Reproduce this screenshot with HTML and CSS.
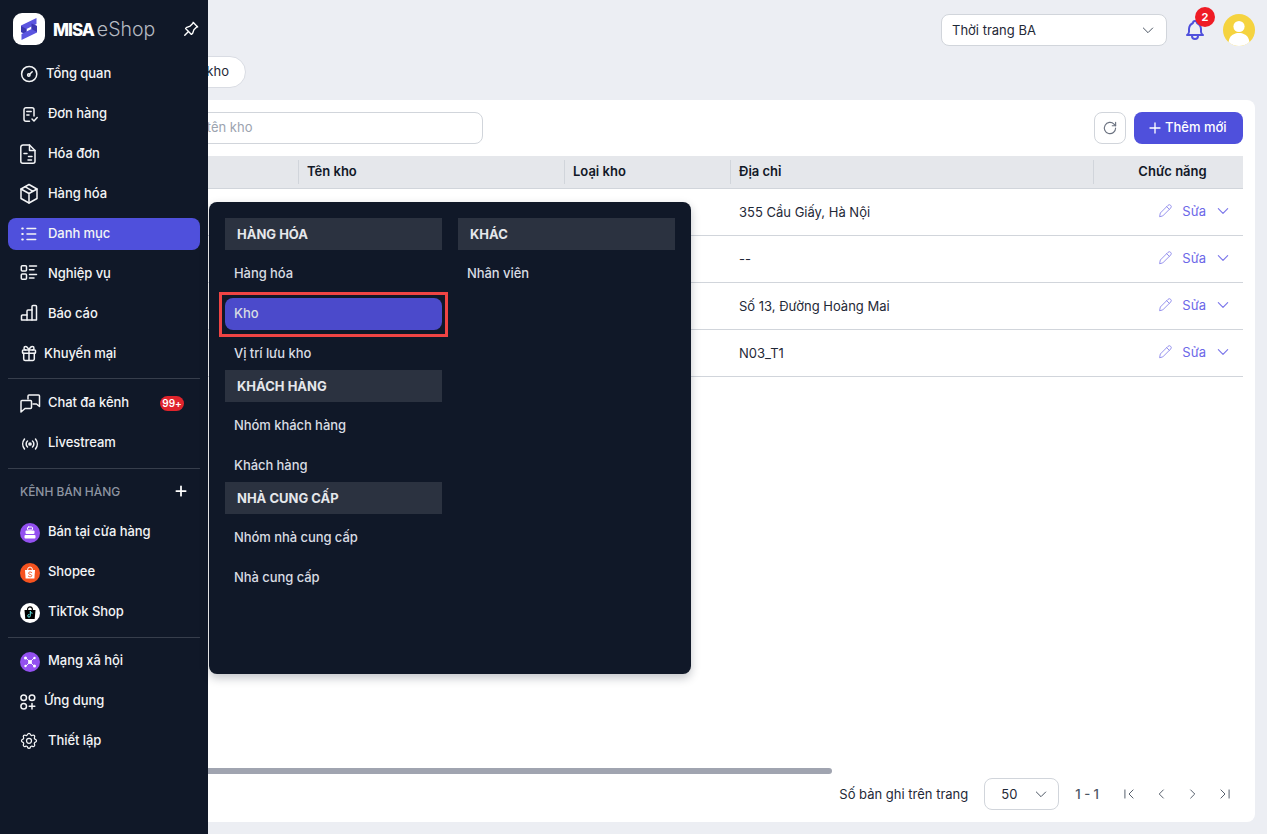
FILE: index.html
```html
<!DOCTYPE html>
<html lang="vi">
<head>
<meta charset="utf-8">
<title>Kho - MISA eShop</title>
<link rel="stylesheet" href="styles.css">
</head>
<body>
<div class="app">
  <main class="main">
    <header class="topbar">
      <div class="shop-select"><span>Thời trang BA</span>
        <svg class="chev" viewBox="0 0 24 24"><path d="M5 9l7 7 7-7"/></svg>
      </div>
      <div class="bell">
        <svg viewBox="0 0 24 24"><path d="M10 5a2 2 0 1 1 4 0a7 7 0 0 1 4 6v3a4 4 0 0 0 2 3H4a4 4 0 0 0 2-3v-3a7 7 0 0 1 4-6"/><path d="M9 17v1a3 3 0 0 0 6 0v-1"/></svg>
        <span class="bell-badge">2</span>
      </div>
      <div class="avatar">
        <svg viewBox="0 0 32 32"><circle cx="16" cy="16" r="16" fill="#f5d33f"/><circle cx="16" cy="12.500" r="5.600" fill="#fff"/><path d="M5.500 28c1-6.500 5.500-9 10.500-9s9.500 2.500 10.500 9a16 16 0 0 1-21 0z" fill="#fff"/></svg>
      </div>
    </header>
    <div class="tabs"><div class="tab">Danh sách kho</div></div>
    <section class="card">
      <div class="toolbar">
        <div class="search">Tìm kiếm theo mã kho, tên kho</div>
        <div class="toolbar-actions">
          <button class="refresh"><svg viewBox="0 0 24 24"><path d="M19.500 12a7.500 7.500 0 1 1-2.200-5.300L19.500 9"/><path d="M19.500 4.500V9H15"/></svg></button>
          <button class="add"><svg viewBox="0 0 24 24"><path d="M12 4.500v15M4.500 12h15"/></svg>Thêm mới</button>
        </div>
      </div>
      <table class="grid">
        <colgroup><col class="c1"><col class="c2"><col class="c3"><col class="c4"><col class="c5"></colgroup>
        <thead>
          <tr><th>Mã kho</th><th>Tên kho</th><th>Loại kho</th><th>Địa chỉ</th><th class="center">Chức năng</th></tr>
        </thead>
        <tbody>
          <tr><td></td><td></td><td></td><td>355 Cầu Giấy, Hà Nội</td><td class="act"><span class="act-in"><svg class="pen" viewBox="0 0 24 24"><path d="M4 20l1-5L16.500 3.500a2.800 2.800 0 0 1 4 4L9 19z"/><path d="M14.500 5.500l4 4"/></svg>Sửa<svg class="down" viewBox="0 0 24 24"><path d="M5 8.500l7 7 7-7"/></svg></span></td></tr>
          <tr><td></td><td></td><td></td><td>--</td><td class="act"><span class="act-in"><svg class="pen" viewBox="0 0 24 24"><path d="M4 20l1-5L16.500 3.500a2.800 2.800 0 0 1 4 4L9 19z"/><path d="M14.500 5.500l4 4"/></svg>Sửa<svg class="down" viewBox="0 0 24 24"><path d="M5 8.500l7 7 7-7"/></svg></span></td></tr>
          <tr><td></td><td></td><td></td><td>Số 13, Đường Hoàng Mai</td><td class="act"><span class="act-in"><svg class="pen" viewBox="0 0 24 24"><path d="M4 20l1-5L16.500 3.500a2.800 2.800 0 0 1 4 4L9 19z"/><path d="M14.500 5.500l4 4"/></svg>Sửa<svg class="down" viewBox="0 0 24 24"><path d="M5 8.500l7 7 7-7"/></svg></span></td></tr>
          <tr><td></td><td></td><td></td><td>N03_T1</td><td class="act"><span class="act-in"><svg class="pen" viewBox="0 0 24 24"><path d="M4 20l1-5L16.500 3.500a2.800 2.800 0 0 1 4 4L9 19z"/><path d="M14.500 5.500l4 4"/></svg>Sửa<svg class="down" viewBox="0 0 24 24"><path d="M5 8.500l7 7 7-7"/></svg></span></td></tr>
        </tbody>
      </table>
      <div class="spacer"></div>
      <div class="hscroll"></div>
      <footer class="pager">
        <span>Số bản ghi trên trang</span>
        <div class="size-select"><span>50</span><svg class="chev" viewBox="0 0 24 24"><path d="M5 9l7 7 7-7"/></svg></div>
        <span class="range">1 - 1</span>
        <div class="pager-btns">
          <svg viewBox="0 0 24 24"><path d="M5 5v14M19 5l-7 7 7 7"/></svg>
          <svg viewBox="0 0 24 24"><path d="M16 5l-7 7 7 7"/></svg>
          <svg viewBox="0 0 24 24"><path d="M8 5l7 7-7 7"/></svg>
          <svg viewBox="0 0 24 24"><path d="M5 5l7 7-7 7M19 5v14"/></svg>
        </div>
      </footer>
    </section>
  </main>

  <aside class="sidebar">
    <div class="brand">
      <div class="logo">
        <svg viewBox="0 0 32 32"><path d="M23.500 5L8 12.500V19l5.500 2.500V16l10-5z" fill="#5b55e0"/><path d="M8 13v6l5.500 2.500V16z" fill="#3c37b0"/><path d="M8.500 27L24 19.500V13l-5.500-2.500V16l-10 5z" fill="#5b55e0"/><path d="M24 19v-6l-5.500-2.500V16z" fill="#3c37b0"/></svg>
      </div>
      <div class="brand-name"><b>MISA</b><span>eShop</span></div>
      <svg class="pin" viewBox="0 0 24 24"><path d="M15 4.500l-4 4-4 1.500-1.500 1.500 7 7 1.500-1.500 1.500-4 4-4"/><path d="M9 15l-4.500 4.500"/><path d="M14.500 4l5.500 5.500"/></svg>
    </div>
    <nav class="nav">
      <a class="item tight-2"><svg viewBox="0 0 20 20"><circle cx="9.200" cy="11" r="7.600"/><circle cx="8.800" cy="12" r="1.200"/><path d="M9.900 11l2.300-2.300"/></svg>Tổng quan</a>
      <a class="item"><svg viewBox="0 0 20 20"><path d="M9.500 18.200H6a2 2 0 0 1-2-2V6.800a2 2 0 0 1 2-2h6a2 2 0 0 1 2 2V13"/><path d="M6.800 8.500h4.400M6.800 12h2.200M12 16l2 2 3.200-3.400"/></svg>Đơn hàng</a>
      <a class="item"><svg viewBox="0 0 20 20"><path d="M9.500 2H3a2.200 2.200 0 0 0-2.200 2.200v14a2 2 0 0 0 2 2H13a2 2 0 0 0 2-2V7.500z"/><path d="M9.500 2v5.500H15M4 10.500h3M8.500 13.500h3.500M8 17h3.500"/></svg>Hóa đơn</a>
      <a class="item"><svg viewBox="0 0 20 20"><path d="M9 1.500l8 4.500v9.500L9 20l-8-4.500V6z"/><path d="M1 6l8 4.500L17 6M9 10.500V20M5 3.700l8 4.700"/></svg>Hàng hóa</a>
      <a class="item active"><svg viewBox="0 0 20 20"><path d="M7 5.500h8.700M7 11h8.700M7 16.500h8.700"/><path class="dots" d="M2.200 5.500h.6M2.200 11h.6M2.200 16.500h.6"/></svg>Danh mục</a>
      <a class="item"><svg viewBox="0 0 20 20"><rect x="1.300" y="2.700" width="5.200" height="5.200" rx="1"/><rect x="1.300" y="11" width="5.200" height="5.200" rx="1"/><path d="M9.500 3h7M9.500 6.700H14M9.500 11.500h7M9.500 15H14"/></svg>Nghiệp vụ</a>
      <a class="item"><svg viewBox="0 0 20 20"><path d="M1.500 17v-4a1 1 0 0 1 1-1H7V8a1 1 0 0 1 1-1h4V3.500a1 1 0 0 1 1-1h2.500a1 1 0 0 1 1 1V17z"/><path d="M7 12v5M12 7v10"/></svg>Báo cáo</a>
      <a class="item tight-4"><svg viewBox="0 0 20 20"><rect x="2.500" y="7" width="13" height="3.200" rx=".8"/><path d="M9 7v10.500M14.300 10.200V16a1.500 1.500 0 0 1-1.500 1.500H5.200A1.500 1.500 0 0 1 3.700 16v-5.800M5.700 7a1.700 1.700 0 0 1 0-3.400C7.800 3.600 9 7 9 7s1.200-3.400 3.300-3.400a1.700 1.700 0 0 1 0 3.400"/></svg>Khuyến mại</a>
      <div class="rule"></div>
      <a class="item"><svg viewBox="0 0 20 20"><path d="M8 7V4a1 1 0 0 1 1-1h9.500a1 1 0 0 1 1 1v10.500l-3-2.500H13"/><path d="M1 9.500a1 1 0 0 1 1-1h8.500a1 1 0 0 1 1 1v6a1 1 0 0 1-1 1H5l-4 3.500z"/></svg>Chat đa kênh<span class="count">99+</span></a>
      <a class="item"><svg viewBox="0 0 20 20"><circle cx="10" cy="12" r="1.100" class="solid"/><path d="M7.500 9a4 4 0 0 0 0 6M12.500 9a4 4 0 0 1 0 6M4.500 7a8 8 0 0 0 0 10M15.500 7a8 8 0 0 1 0 10"/></svg>Livestream</a>
      <div class="rule rule-low"></div>
      <div class="section"><span>KÊNH BÁN HÀNG</span><svg viewBox="0 0 24 24"><path d="M12 4v16M4 12h16"/></svg></div>
      <a class="item"><svg class="chan" viewBox="0 0 20 20"><circle cx="10" cy="10" r="10" fill="#9350f0"/><rect x="7.500" y="4" width="5" height="3" rx="1" fill="none" stroke="#fff" stroke-width="1"/><rect x="5.500" y="7.500" width="9" height="3.500" rx="1" fill="#fff"/><rect x="4.500" y="12" width="11" height="3.500" rx="1" fill="#fff"/></svg>Bán tại cửa hàng</a>
      <a class="item"><svg class="chan" viewBox="0 0 20 20"><circle cx="10" cy="10" r="10" fill="#f6531f"/><path d="M5 7h10l-.6 8.500H5.600z" fill="#fff"/><path d="M7.500 7a2.500 3 0 0 1 5 0" fill="none" stroke="#fff" stroke-width="1"/><path d="M11.800 9.500c-1-1-3.300-.7-3.300.7 0 1.600 3.300.9 3.300 2.500 0 1.300-2.400 1.500-3.500.5" fill="none" stroke="#f6531f" stroke-width=".9"/></svg>Shopee</a>
      <a class="item"><svg class="chan" viewBox="0 0 20 20"><circle cx="10" cy="10" r="10" fill="#fff"/><path d="M4.500 7h11l-.8 9H5.300z" fill="#000"/><path d="M7.500 7a2.500 3.200 0 0 1 5 0" fill="none" stroke="#000" stroke-width="1.200"/><path d="M10.300 8.500v4.300a1.300 1.300 0 1 1-1.300-1.300M10.300 8.500c.2 1 .9 1.600 1.900 1.700" fill="none" stroke="#5fe6e6" stroke-width="1"/></svg>TikTok Shop</a>
      <div class="rule rule-low"></div>
      <a class="item"><svg class="chan" viewBox="0 0 20 20"><circle cx="10" cy="10" r="10" fill="#9350f0"/><path d="M6 6l8 8M14 6l-8 8" stroke="#fff" stroke-width=".9"/><circle cx="10" cy="10" r="2" fill="#fff"/><circle cx="5.500" cy="6" r="1.500" fill="#fff"/><circle cx="14.500" cy="6" r="1.200" fill="#fff"/><circle cx="5.500" cy="14" r="1.200" fill="#fff"/><circle cx="14.500" cy="14" r="1.500" fill="#fff"/></svg>Mạng xã hội</a>
      <a class="item tight-4"><svg viewBox="0 0 20 20"><circle cx="3.700" cy="7.800" r="2.800"/><circle cx="12" cy="7.800" r="2.800"/><circle cx="3.700" cy="16.200" r="2.800"/><path d="M12 13.400V19M9.200 16.200h5.600"/></svg>Ứng dụng</a>
      <a class="item"><svg viewBox="0 0 24 24"><path d="M10.325 4.317c.426-1.756 2.924-1.756 3.350 0a1.724 1.724 0 0 0 2.573 1.066c1.543-.94 3.310.826 2.370 2.370a1.724 1.724 0 0 0 1.065 2.572c1.756.426 1.756 2.924 0 3.350a1.724 1.724 0 0 0-1.066 2.573c.94 1.543-.826 3.310-2.370 2.370a1.724 1.724 0 0 0-2.572 1.065c-.426 1.756-2.924 1.756-3.350 0a1.724 1.724 0 0 0-2.573-1.066c-1.543.94-3.310-.826-2.370-2.370a1.724 1.724 0 0 0-1.065-2.572c-1.756-.426-1.756-2.924 0-3.350a1.724 1.724 0 0 0 1.066-2.573c-.94-1.543.826-3.310 2.370-2.370 1 .608 2.296.07 2.572-1.065z" transform="translate(-1.200 1)"/><circle cx="10.800" cy="13" r="3"/></svg>Thiết lập</a>
    </nav>
  </aside>

  <div class="flyout">
    <div class="fly-col">
      <div class="fly-head">HÀNG HÓA</div>
      <a class="fly-item">Hàng hóa</a>
      <a class="fly-item current">Kho<span class="callout"></span></a>
      <a class="fly-item">Vị trí lưu kho</a>
      <div class="fly-head">KHÁCH HÀNG</div>
      <a class="fly-item">Nhóm khách hàng</a>
      <a class="fly-item">Khách hàng</a>
      <div class="fly-head">NHÀ CUNG CẤP</div>
      <a class="fly-item">Nhóm nhà cung cấp</a>
      <a class="fly-item">Nhà cung cấp</a>
    </div>
    <div class="fly-col">
      <div class="fly-head">KHÁC</div>
      <a class="fly-item">Nhân viên</a>
    </div>
  </div>
</div>
</body>
</html>
```
FILE: styles.css
```css
* { box-sizing: border-box; }
html, body { margin: 0; height: 100%; overflow: hidden; }
body { font-family: Inter, "Noto Sans", sans-serif; font-size: 13px; color: #1f2937; background: #eceef3; }
svg { display: block; fill: none; stroke: currentColor; stroke-linecap: round; stroke-linejoin: round; }

.app { position: relative; height: 100vh; }

/* main column */
.main { height: 100%; display: flex; flex-direction: column; padding: 0 12px 12px; }
.topbar { height: 56px; flex: none; display: flex; align-items: center; justify-content: flex-end; padding-top: 4px; }
.shop-select { width: 226px; height: 32px; display: flex; align-items: center; justify-content: space-between; padding: 0 10px; background: #fff; border: 1px solid #d1d5db; border-radius: 8px; color: #1f2937; }
.chev { width: 16px; height: 16px; color: #4b5563; stroke-width: 1.5; }
.bell { position: relative; width: 24px; height: 24px; margin: 0 16px; color: #4f50dc; }
.bell svg { width: 24px; height: 24px; stroke-width: 2; }
.bell-badge { position: absolute; left: 12px; top: -11px; width: 20px; height: 20px; border-radius: 50%; background: #ef1c25; color: #fff; font-size: 11px; font-weight: 700; text-align: center; line-height: 20px; }
.avatar { width: 32px; height: 32px; }
.avatar svg { width: 32px; height: 32px; stroke: none; }

.tabs { height: 32px; flex: none; margin-bottom: 12px; }
.tab { width: 234px; height: 32px; line-height: 28px; text-align: right; padding-right: 16px; background: #fff; border: 1px solid #d9dce3; border-radius: 16px; }

.card { flex: 1; min-height: 0; display: flex; flex-direction: column; background: #fff; border-radius: 8px; padding: 12px; }
.toolbar { flex: none; height: 32px; display: flex; justify-content: space-between; margin-bottom: 12px; }
.search { width: 459px; height: 32px; line-height: 28px; border: 1px solid #d1d5db; border-radius: 8px; padding-left: 39px; color: #9ca3af; }
.toolbar-actions { display: flex; gap: 8px; }
.refresh { width: 32px; height: 32px; padding: 0; display: flex; align-items: center; justify-content: center; background: #fff; border: 1px solid #d1d5db; border-radius: 8px; color: #6b7280; }
.refresh svg { width: 18px; height: 18px; stroke-width: 1.5; }
.add { width: 109px; height: 32px; padding: 0 0 2px 13px; display: flex; align-items: center; gap: 2px; background: #4f50dc; border: 0; border-radius: 8px; color: #fff; font: 500 13px Inter, sans-serif; }
.add svg { width: 16px; height: 16px; stroke-width: 2; margin-top: 2px; }

.grid { flex: none; width: 100%; table-layout: fixed; border-collapse: collapse; }
.c1 { width: 274px; } .c2 { width: 266px; } .c3 { width: 166px; } .c4 { width: 363px; } .c5 { width: 150px; }
.grid th { position: relative; height: 32px; padding: 0 9px 2px; text-align: left; font-weight: 600; color: #111827; background: #e5e7eb; border-bottom: 1px solid #d1d5db; }
.grid th + th::before { content: ""; position: absolute; left: 0; top: 4px; bottom: 4px; width: 1px; background: #d1d5db; }
.grid th.center { text-align: center; padding: 0 0 2px 9px; }
.grid td { height: 47px; padding: 0 9px; border-bottom: 1px solid #d1d5db; color: #1f2937; }
.grid td.act { padding: 0 12px 2px 0; color: #6c67e8; }
.act-in { display: flex; align-items: center; justify-content: flex-end; }
.pen { width: 16px; height: 16px; stroke-width: 1.4; margin-right: 9px; color: #8f8bec; }
.down { width: 16px; height: 16px; stroke-width: 1.7; margin-left: 9px; color: #7a75ea; }

.spacer { flex: 1; }
.hscroll { flex: none; width: 808px; height: 6px; border-radius: 3px; background: #a0a4b0; margin-bottom: 4px; }
.pager { flex: none; height: 32px; display: flex; align-items: center; justify-content: flex-end; }
.size-select { width: 75px; height: 32px; margin: 0 16px; display: flex; align-items: center; justify-content: space-between; padding: 0 9px 0 16px; border: 1px solid #d1d5db; border-radius: 8px; }
.range { color: #4b5563; font-weight: 500; margin-right: 23px; }
.pager-btns { display: flex; gap: 18px; margin-right: 11px; color: #4b5563; }
.pager-btns svg { width: 14px; height: 14px; stroke-width: 1.6; }

/* sidebar overlay */
.sidebar { position: absolute; left: 0; top: 0; bottom: 0; width: 208px; background: #101828; color: #fff; padding: 0 8px; letter-spacing: -.06px; }
.brand { height: 58px; display: flex; align-items: center; padding: 0 0 0 5px; }
.logo { width: 32px; height: 32px; border-radius: 9px; background: #fff; flex: none; }
.logo svg { width: 32px; height: 32px; stroke: none; }
.brand-name { margin-left: 8px; display: flex; align-items: baseline; font-size: 19.5px; line-height: 24px; letter-spacing: 0; }
.brand-name b { font-weight: 800; font-size: 17px; letter-spacing: -1px; }
.brand-name span { font-weight: 300; margin-left: 3px; color: #b6bac2; }
.pin { width: 20px; height: 20px; margin: 0 -1px 0 auto; stroke-width: 1.6; flex: none; }
.nav { display: flex; flex-direction: column; gap: 8px; }
.item { height: 32px; display: flex; align-items: center; gap: 8px; padding: 0 0 2px 12px; border-radius: 8px; font-weight: 500; color: #f3f4f6; position: relative; }
.item > svg { width: 20px; height: 20px; flex: none; stroke-width: 1.5; overflow: visible; }
.item.tight-2 { gap: 6px; }
.item.tight-4 { gap: 4px; }
.item > svg.chan { stroke: none; margin-top: 4px; }
.item.active { background: #4f50dc; }
.dots { stroke-width: 2; }
.solid { fill: currentColor; }
.count { position: absolute; right: 16px; top: 9px; width: 24px; height: 15px; line-height: 15px; text-align: center; border-radius: 8px; background: #e0242c; color: #fff; font-size: 10px; font-weight: 600; }
.rule { height: 1px; background: #373e4c; }
.rule-low { margin: 1px 0 -1px; }
.section { height: 32px; display: flex; align-items: center; justify-content: space-between; padding: 0 12px 2px; color: #8d94a1; font-size: 12px; font-weight: 500; }
.section svg { width: 14px; height: 14px; color: #fff; stroke-width: 3; }

/* flyout menu */
.flyout { position: absolute; left: 209px; top: 202px; width: 482px; height: 472px; display: flex; gap: 16px; padding: 16px; background: #101828; border-radius: 8px; box-shadow: 0 4px 10px rgba(15, 24, 40, .25); }
.fly-col { width: 217px; display: flex; flex-direction: column; }
.fly-head { height: 32px; line-height: 32px; padding-left: 12px; background: #2b3240; color: #e5e7eb; font-weight: 700; flex: none; }
.fly-item + .fly-head { margin-top: 1px; }
.fly-item { height: 32px; line-height: 32px; flex: none; padding-left: 9px; margin-top: 8px; border-radius: 8px; color: #d9dce3; font-weight: 500; position: relative; letter-spacing: -.06px; }
.fly-head + .fly-item { margin-top: 7px; }
.fly-item.current { margin-top: 9px; line-height: 30px; background: #4b4acb; }
.fly-item.current + .fly-item { margin-top: 7px; }
.callout { position: absolute; left: -6px; right: -6px; top: -6px; bottom: -7px; border: 3px solid #ef4444; }
```
